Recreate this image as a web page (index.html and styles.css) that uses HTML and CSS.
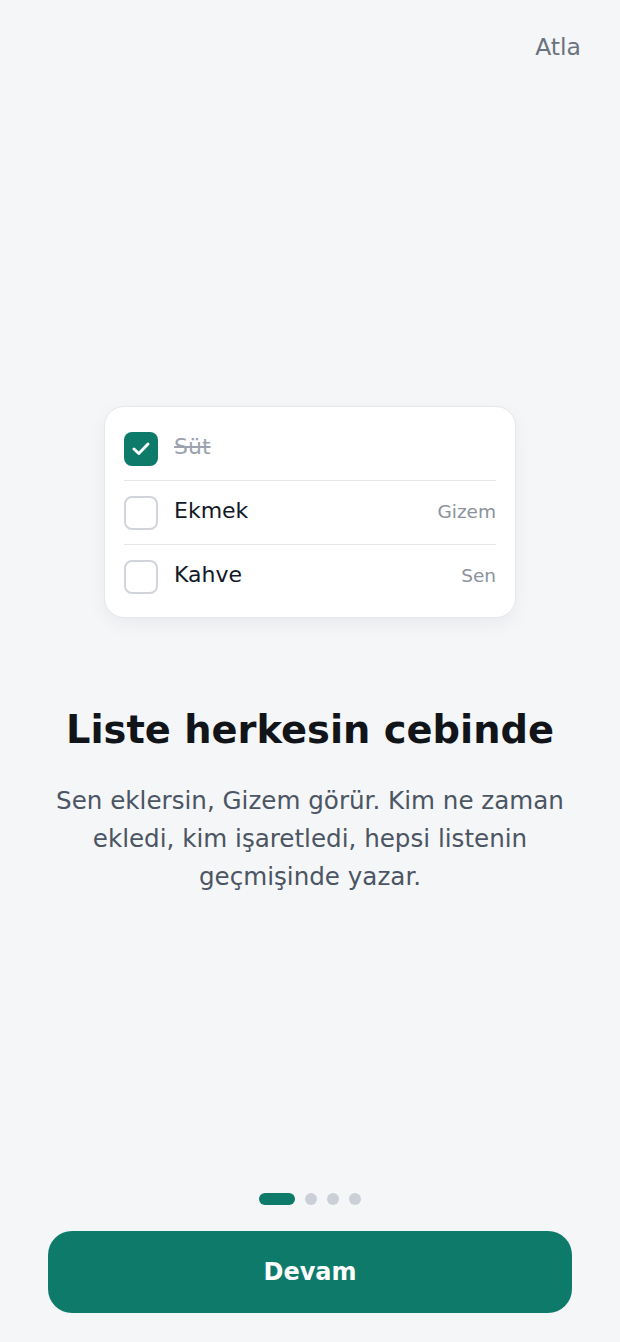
FILE: index.html
```html
<!DOCTYPE html>
<html lang="tr">
<head>
<meta charset="utf-8">
<title>Liste</title>
<link rel="stylesheet" href="styles.css">
</head>
<body>
<div class="screen">
  <header class="header">
    <button class="skip">Atla</button>
  </header>
  <main class="content">
    <div class="card">
      <div class="row">
        <span class="box checked">
          <svg viewBox="0 0 34 34" width="34" height="34"><path d="M10 17 L14.8 21.5 L24 12" fill="none" stroke="#fff" stroke-width="3" stroke-linecap="round" stroke-linejoin="round"/></svg>
        </span>
        <span class="item done">Süt</span>
      </div>
      <div class="row">
        <span class="box"></span>
        <span class="item">Ekmek</span>
        <span class="who">Gizem</span>
      </div>
      <div class="row">
        <span class="box"></span>
        <span class="item">Kahve</span>
        <span class="who">Sen</span>
      </div>
    </div>
    <h1 class="title">Liste herkesin cebinde</h1>
    <p class="desc">Sen eklersin, Gizem görür. Kim ne zaman ekledi, kim işaretledi, hepsi listenin geçmişinde yazar.</p>
  </main>
  <footer class="footer">
    <div class="dots">
      <span class="dot active"></span>
      <span class="dot"></span>
      <span class="dot"></span>
      <span class="dot"></span>
    </div>
    <button class="cta">Devam</button>
  </footer>
</div>
</body>
</html>
```
FILE: styles.css
```css
* { box-sizing: border-box; }
html, body {
  margin: 0;
  padding: 0;
  background: #f5f6f8;
  font-family: "DejaVu Sans", "Noto Sans", sans-serif;
}
.screen {
  min-height: 100vh;
  display: flex;
  flex-direction: column;
}
.header {
  display: flex;
  justify-content: flex-end;
  padding: 30px 39px 0;
}
.skip {
  background: none;
  border: none;
  padding: 0;
  font-family: inherit;
  font-size: 23.5px;
  line-height: 34px;
  color: #6b7280;
}
.content {
  flex: 1;
  display: flex;
  flex-direction: column;
  align-items: center;
  justify-content: center;
  padding: 46px 40px 0;
}
.card {
  width: 412px;
  background: #fff;
  border: 1px solid #e5e7eb;
  border-radius: 20px;
  padding: 10px 19px 9px;
  box-shadow: 0 6px 18px rgba(17, 24, 39, 0.05);
}
.row {
  display: flex;
  align-items: center;
  height: 64px;
  border-bottom: 1px solid #e5e7eb;
}
.row:last-child { border-bottom: none; height: 63px; }
.box {
  width: 34px;
  height: 34px;
  border: 2px solid #d1d5db;
  border-radius: 8px;
  flex: none;
  display: flex;
  align-items: center;
  justify-content: center;
}
.box.checked {
  background: #0e7b6a;
  border: none;
}
.item {
  margin-left: 16px;
  padding-bottom: 4px;
  font-size: 22px;
  color: #111827;
  flex: 1;
}
.item.done {
  color: #9ca3af;
  text-decoration: line-through;
}
.who {
  padding-bottom: 2px;
  font-size: 18.5px;
  color: #8b929c;
}
.title {
  margin: 89px 0 0;
  font-size: 38.4px;
  line-height: 1.2;
  font-weight: bold;
  color: #111418;
  text-align: center;
}
.desc {
  margin: 28px 0 0;
  font-size: 24.6px;
  line-height: 1.56;
  color: #4b5563;
  text-align: center;
}
.footer {
  padding: 0 48px 29px;
  display: flex;
  flex-direction: column;
  align-items: center;
}
.dots {
  display: flex;
  gap: 10px;
  margin-bottom: 26px;
}
.dot {
  width: 12px;
  height: 12px;
  border-radius: 6px;
  background: #cbd0d8;
}
.dot.active {
  width: 36px;
  background: #0e7b6a;
}
.cta {
  width: 100%;
  height: 82px;
  border: none;
  border-radius: 24px;
  background: #0e7b6a;
  color: #fff;
  font-family: inherit;
  font-size: 24px;
  font-weight: bold;
}
```
